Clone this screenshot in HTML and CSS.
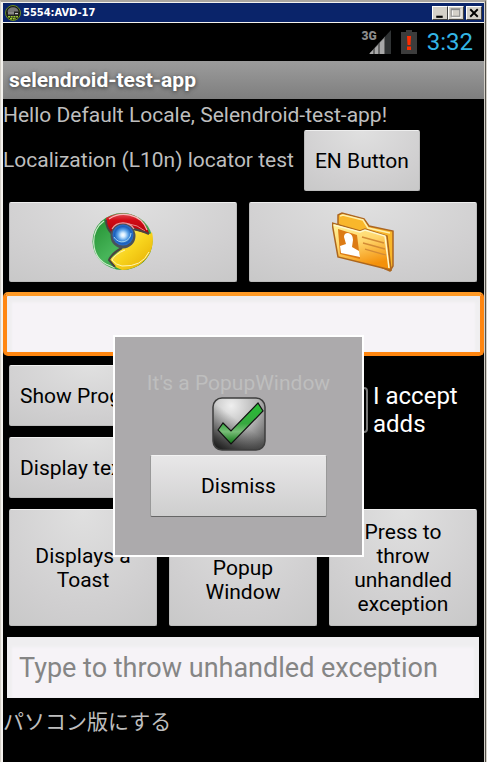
FILE: index.html
```html
<!DOCTYPE html>
<html lang="en">
<head>
<meta charset="utf-8">
<title>5554:AVD-17</title>
<link rel="stylesheet" href="styles.css">
</head>
<body>
<div class="window">
  <header class="titlebar">
    <svg class="titlebar-icon" viewBox="0 0 16 16" aria-hidden="true">
      <circle cx="8" cy="8" r="7.5" fill="#151a10" stroke="#6c8c24"/>
      <circle cx="8" cy="8" r="6.2" fill="#222"/>
      <path d="M2.5 6.5a5.7 5.7 0 0 1 11 0z" fill="#777"/>
      <path d="M4 6.5v3M6 6.5v3M8 6.5v3M10 8.7h3" stroke="#eee"/>
      <path d="M3 11.7h10M5 13.7h6" stroke="#9ccb35" stroke-width="1.6" stroke-dasharray="2 .7"/>
    </svg>
    <h1 class="titlebar-text">5554:AVD-17</h1>
    <div class="window-controls">
      <button class="control" aria-label="Minimize"><svg viewBox="0 0 13 11"><path d="M3 8h6v2H3z"/></svg></button>
      <button class="control" aria-label="Maximize"><svg viewBox="0 0 13 11"><path d="M3 2.5h8v7H3z" fill="none" stroke="#fff"/><path d="M2 1.5h8v7H2zM2 2.5h8" fill="none" stroke="#888"/></svg></button>
      <button class="control control-close" aria-label="Close"><svg viewBox="0 0 13 11"><path d="M3 2l7 7M10 2L3 9" stroke="#000" stroke-width="1.7"/></svg></button>
    </div>
  </header>
  <main class="screen">
    <div class="statusbar">
      <div class="network"><span class="network-type">3G</span>
        <svg class="signal" viewBox="0 0 22 24" aria-hidden="true">
          <path d="M22 0v24H0z" fill="#303334"/>
          <path d="M16 6.5V24H0z" fill="#686868"/>
          <path d="M1 23l3-3v4H1zM6 18l3-3v9H6zM11 12.5l4-4V24h-4z" fill="#a8a8a8"/>
        </svg>
      </div>
      <svg class="battery" viewBox="0 0 16 24" aria-hidden="true">
        <path d="M5 0h6v2h5v22H0V2h5z" fill="#3c3c3c"/>
        <path d="M6 6h4l-.5 9h-3zM6 16.5h4V20H6z" fill="#ff2d00"/>
      </svg>
      <time class="clock">3:32</time>
    </div>
    <h2 class="appbar">selendroid-test-app</h2>
    <div class="content">
      <p class="label">Hello Default Locale, Selendroid-test-app!</p>
      <div class="locale-row">
        <p class="label">Localization (L10n) locator test</p>
        <button class="btn">EN Button</button>
      </div>
      <div class="image-row">
        <button class="btn btn-image" aria-label="Chrome">
          <svg class="picture" viewBox="0 0 62 60">
            <defs>
              <linearGradient id="red" x2="0" y2="1"><stop stop-color="#e0525a"/><stop offset=".3" stop-color="#d20b16"/><stop offset="1" stop-color="#a80008"/></linearGradient>
              <linearGradient id="green" x2="1" y2="1"><stop stop-color="#1d8b2b"/><stop offset=".5" stop-color="#48b55a"/><stop offset="1" stop-color="#08771a"/></linearGradient>
              <linearGradient id="yellow" x2="1" y2="1"><stop stop-color="#fff08c"/><stop offset=".5" stop-color="#f8d41d"/><stop offset="1" stop-color="#e3a900"/></linearGradient>
              <radialGradient id="blue"><stop stop-color="#fff"/><stop offset=".2" stop-color="#d4ecff"/><stop offset=".5" stop-color="#5ca3e8"/><stop offset=".8" stop-color="#1b60bc"/><stop offset="1" stop-color="#2b6fcb"/></radialGradient>
            </defs>
            <ellipse cx="30.5" cy="29.5" rx="30" ry="28.5" fill="url(#green)"/>
            <path d="M14 6C27-2 51-1 57 21v3Q45 17 33 17L20 22Q14 14 14 6z" fill="url(#red)"/>
            <path d="M60 20C65 41 49 58 30 58Q21 55 17 48L31 36 40 18 58 22z" fill="url(#yellow)"/>
            <path d="M12 9C-3 20-1 44 14 52l9 4" fill="none" stroke="#cceacb" stroke-width="1.2"/>
            <path d="M17 7C28-1 49 1 55 18" fill="none" stroke="#f5bbb9" stroke-width="1.2"/>
            <path d="M22 17Q37 6 53 19" fill="none" stroke="#e88488"/>
            <path d="M14 8q0 8 6 14M36 16q10 1 21 6" fill="none" stroke="#4b4340" stroke-width="2"/>
            <path d="M30 36Q20 41 17 48l6 7" fill="none" stroke="#4b4340" stroke-width="2"/>
            <path d="M33 38Q23 42 20 48q4 5 10 6 20 1 27-14" fill="none" stroke="#fff6b2"/>
            <circle cx="31" cy="24" r="12.5" fill="#49515b"/>
            <path d="M20 17a13 13 0 0 1 22 0" fill="none" stroke="#e3a2a4" stroke-width="1.2"/>
            <circle cx="31" cy="23" r="10.5" fill="url(#blue)"/>
            <path d="M22 25a9 9 0 0 0 17-4" fill="none" stroke="#a6d5ed"/>
          </svg>
        </button>
        <button class="btn btn-image" aria-label="Contacts">
          <svg class="picture" viewBox="0 0 62 60">
            <defs><linearGradient id="folder" x2=".35" y2="1"><stop stop-color="#fff49c"/><stop offset=".5" stop-color="#ffd66c"/><stop offset="1" stop-color="#f4910b"/></linearGradient></defs>
            <path d="M6 12V3l4-2 22 6 5 7 24 5v35l-3 5-16-7z" fill="#f9b72b" stroke="#ad6621" stroke-width="1.5"/>
            <path d="M8 4l3-1 20 5 5 8 22 5" fill="none" stroke="#fff0ac" stroke-width="1.5"/>
            <path d="M0 11l28 8 5-2 22 7 4 34L6 45z" fill="url(#folder)" stroke="#ac661e" stroke-width="1.5"/>
            <path d="M2 13l26 7 5-2 20 6 4 32" fill="none" stroke="#fff9cd" stroke-width="1.5"/>
            <path d="M6 17l19 6 3 24-20-5z" fill="#dc7b14"/>
            <path d="M9 41l-1-7 6-2-2-7q0-4 4-4 5 1 5 7l-1 7 7 4 1 6z" fill="#fff"/>
            <path d="M30 25l22 6M31 31l22 6M33 37l21 6" fill="none" stroke="#d38b35" stroke-width="1.3"/>
          </svg>
        </button>
      </div>
      <input class="field field-focused" type="text" aria-label="Text entry">
      <div class="action-row">
        <div class="stack">
          <button class="btn btn-left">Show Progress</button>
          <button class="btn btn-left">Display text</button>
        </div>
        <label class="accept"><input class="checkbox" type="checkbox"><span>I accept adds</span></label>
      </div>
      <div class="button-grid">
        <button class="btn">Displays a Toast</button>
        <button class="btn">Display Popup Window</button>
        <button class="btn">Press to throw unhandled exception</button>
      </div>
      <input class="field field-exception" type="text" placeholder="Type to throw unhandled exception" aria-label="Type to throw unhandled exception">
      <p class="label" lang="ja">パソコン版にする</p>
    </div>
    <section class="popup" role="dialog" aria-labelledby="popup-title">
      <p class="popup-title" id="popup-title">It's a PopupWindow</p>
      <svg class="popup-icon" viewBox="0 0 54 54" aria-hidden="true">
        <defs>
          <radialGradient id="tile" cx=".35" cy=".15" r=".95"><stop stop-color="#efefef"/><stop offset=".55" stop-color="#b3b3b3"/><stop offset="1" stop-color="#555"/></radialGradient>
          <linearGradient id="shade" x1="0" y1="1" x2=".45" y2=".4"><stop stop-color="#111"/><stop offset="1" stop-color="#333" stop-opacity="0"/></linearGradient>
          <linearGradient id="tick" x2="0" y2="1"><stop stop-color="#25bd32"/><stop offset=".5" stop-color="#37a840"/><stop offset=".7" stop-color="#79bc78"/><stop offset="1" stop-color="#08720f"/></linearGradient>
        </defs>
        <rect x="1" y="1" width="52" height="52" rx="9" fill="url(#tile)"/>
        <rect x="1" y="1" width="52" height="52" rx="9" fill="url(#shade)" stroke="#3e3e3e" stroke-width="1.5"/>
        <path d="M6 33l5-7 8 8L46 6l5 8-32 33z" fill="url(#tick)" stroke="#111" stroke-width="1.2"/>
      </svg>
      <button class="btn btn-dismiss">Dismiss</button>
    </section>
  </main>
</div>
</body>
</html>
```
FILE: styles.css
```css
* {
  box-sizing: border-box;
}

body {
  margin: 0;
  background: #d4d0c8;
  font-family: Roboto, "Noto Sans CJK JP", sans-serif;
}

h1,
h2,
p {
  margin: 0;
}

button,
input {
  font: inherit;
}

.window {
  display: flex;
  flex-direction: column;
  min-height: 100vh;
  margin-right: 1px;
  padding: 1px 1px 0 1px;
  border-top: 2px solid #aaa69f;
  border-left: 1px solid #d4d0c8;
  border-right: 1px solid #55534e;
  background: #f4f2ee;
  box-shadow: inset -1px 0 #d4d0c8;
}

.titlebar {
  display: flex;
  align-items: center;
  height: 19px;
  margin: 0 0 1px 1px;
  padding: 0 2px;
  background: #0a246a;
}

.titlebar-icon {
  width: 16px;
  height: 16px;
}

.titlebar-text {
  flex: 1;
  padding-left: 2px;
  color: #fff;
  font: bold 11px/16px "DejaVu Sans Condensed", "DejaVu Sans", sans-serif;
}

.window-controls {
  display: flex;
}

.control {
  width: 16px;
  height: 14px;
  padding: 0;
  border: 1px solid;
  border-color: #fff #404040 #404040 #fff;
  background: #d4d0c8;
}

.control svg {
  display: block;
  width: 100%;
  height: 100%;
}

.control-close {
  margin-left: 2px;
}

.screen {
  position: relative;
  flex: 1;
  margin-left: 1px;
  background: #000;
}

.statusbar {
  display: flex;
  align-items: center;
  justify-content: flex-end;
  height: 38px;
  padding-right: 11px;
}

.network {
  display: flex;
  align-items: center;
}

.network-type {
  align-self: flex-start;
  margin-right: -8px;
  color: #8c8c8c;
  font-size: 12px;
  font-weight: 900;
  line-height: 12px;
}

.signal {
  width: 22px;
  height: 24px;
}

.battery {
  width: 16px;
  height: 24px;
  margin: 0 10px;
}

.clock {
  color: #33b5e5;
  font-size: 24px;
  line-height: 38px;
}

.appbar {
  height: 38px;
  padding-left: 6px;
  background: linear-gradient(#9c9c9c, #7e7e7e);
  color: #fff;
  font-size: 21px;
  line-height: 38px;
  text-shadow: 0 1px 4px #333;
}

.content {
  display: flex;
  flex-direction: column;
  padding-top: 2px;
}

.label {
  color: #bebebe;
  font-size: 21px;
  line-height: 29px;
}

.locale-row {
  display: flex;
  align-items: center;
  gap: 10px;
}

.btn {
  min-width: 0;
  min-height: 61px;
  padding: 0 10px;
  border: 1px solid #bbb;
  border-top-color: #eee;
  border-radius: 2px;
  background: radial-gradient(ellipse 90% 130% at 50% 0, #e0e0e0, #d0cfd0 65%, #c7c7c7);
  color: #000;
  font-size: 21px;
  line-height: 24px;
}

.image-row {
  display: grid;
  grid-template-columns: 1fr 1fr;
  gap: 12px;
  padding: 11px 7px 10px 6px;
}

.btn-image {
  display: flex;
  align-items: center;
  justify-content: center;
  height: 80px;
}

.picture {
  width: 62px;
  height: 60px;
}

.field {
  width: 100%;
  border: 0;
  background: #f6f3f7;
  color: #000;
  font-size: 27px;
}

.field-focused {
  height: 64px;
  padding: 0 12px;
  border: 4px solid #ff8610;
  border-top-color: #ff9a26;
  border-radius: 5px;
  box-shadow: inset 0 6px 3px #eeedef, inset 5px 0 2px #f0eff1, inset -5px 0 2px #f0eff1;
  outline: 0;
}

.action-row {
  display: flex;
  justify-content: space-between;
  padding: 9px 7px 11px 6px;
}

.stack {
  display: grid;
  gap: 11px;
}

.btn-left {
  text-align: left;
}

.accept {
  display: flex;
  align-items: center;
  align-self: flex-start;
  width: 149px;
  height: 90px;
  color: #fff;
  font-size: 24px;
  line-height: 28px;
}

.checkbox {
  flex: none;
  appearance: none;
  width: 40px;
  height: 46px;
  margin: 0 5px 0 0;
  border: 2px solid #777;
  border-radius: 4px;
  background: #000;
}

.button-grid {
  display: grid;
  grid-template-columns: repeat(3, 1fr);
  gap: 12px;
  padding: 0 7px 0 6px;
}

.button-grid .btn {
  min-height: 117px;
}

.field-exception {
  width: auto;
  height: 61px;
  margin: 11px 5px 10px 4px;
  padding: 0 12px;
  box-shadow: inset 0 10px 3px #efeef0, inset 5px 0 2px #f0eff1, inset -5px 0 2px #f0eff1;
}

.field::placeholder {
  color: #858585;
  opacity: 1;
}

.popup {
  position: absolute;
  top: 312px;
  left: 110px;
  display: flex;
  flex-direction: column;
  align-items: center;
  width: 251px;
  padding: 32px 35px 38px;
  border: 2px solid #fff;
  background: #acaaac;
}

.popup-title {
  color: #bebebe;
  font-size: 21px;
  line-height: 28px;
  white-space: nowrap;
}

.popup-icon {
  width: 54px;
  height: 54px;
}

.btn-dismiss {
  align-self: stretch;
  margin-top: 4px;
  height: 62px;
  border-color: #f3f3f3 #999 #666 #999;
  background: linear-gradient(#e8e7e8, #cecece);
}
```
